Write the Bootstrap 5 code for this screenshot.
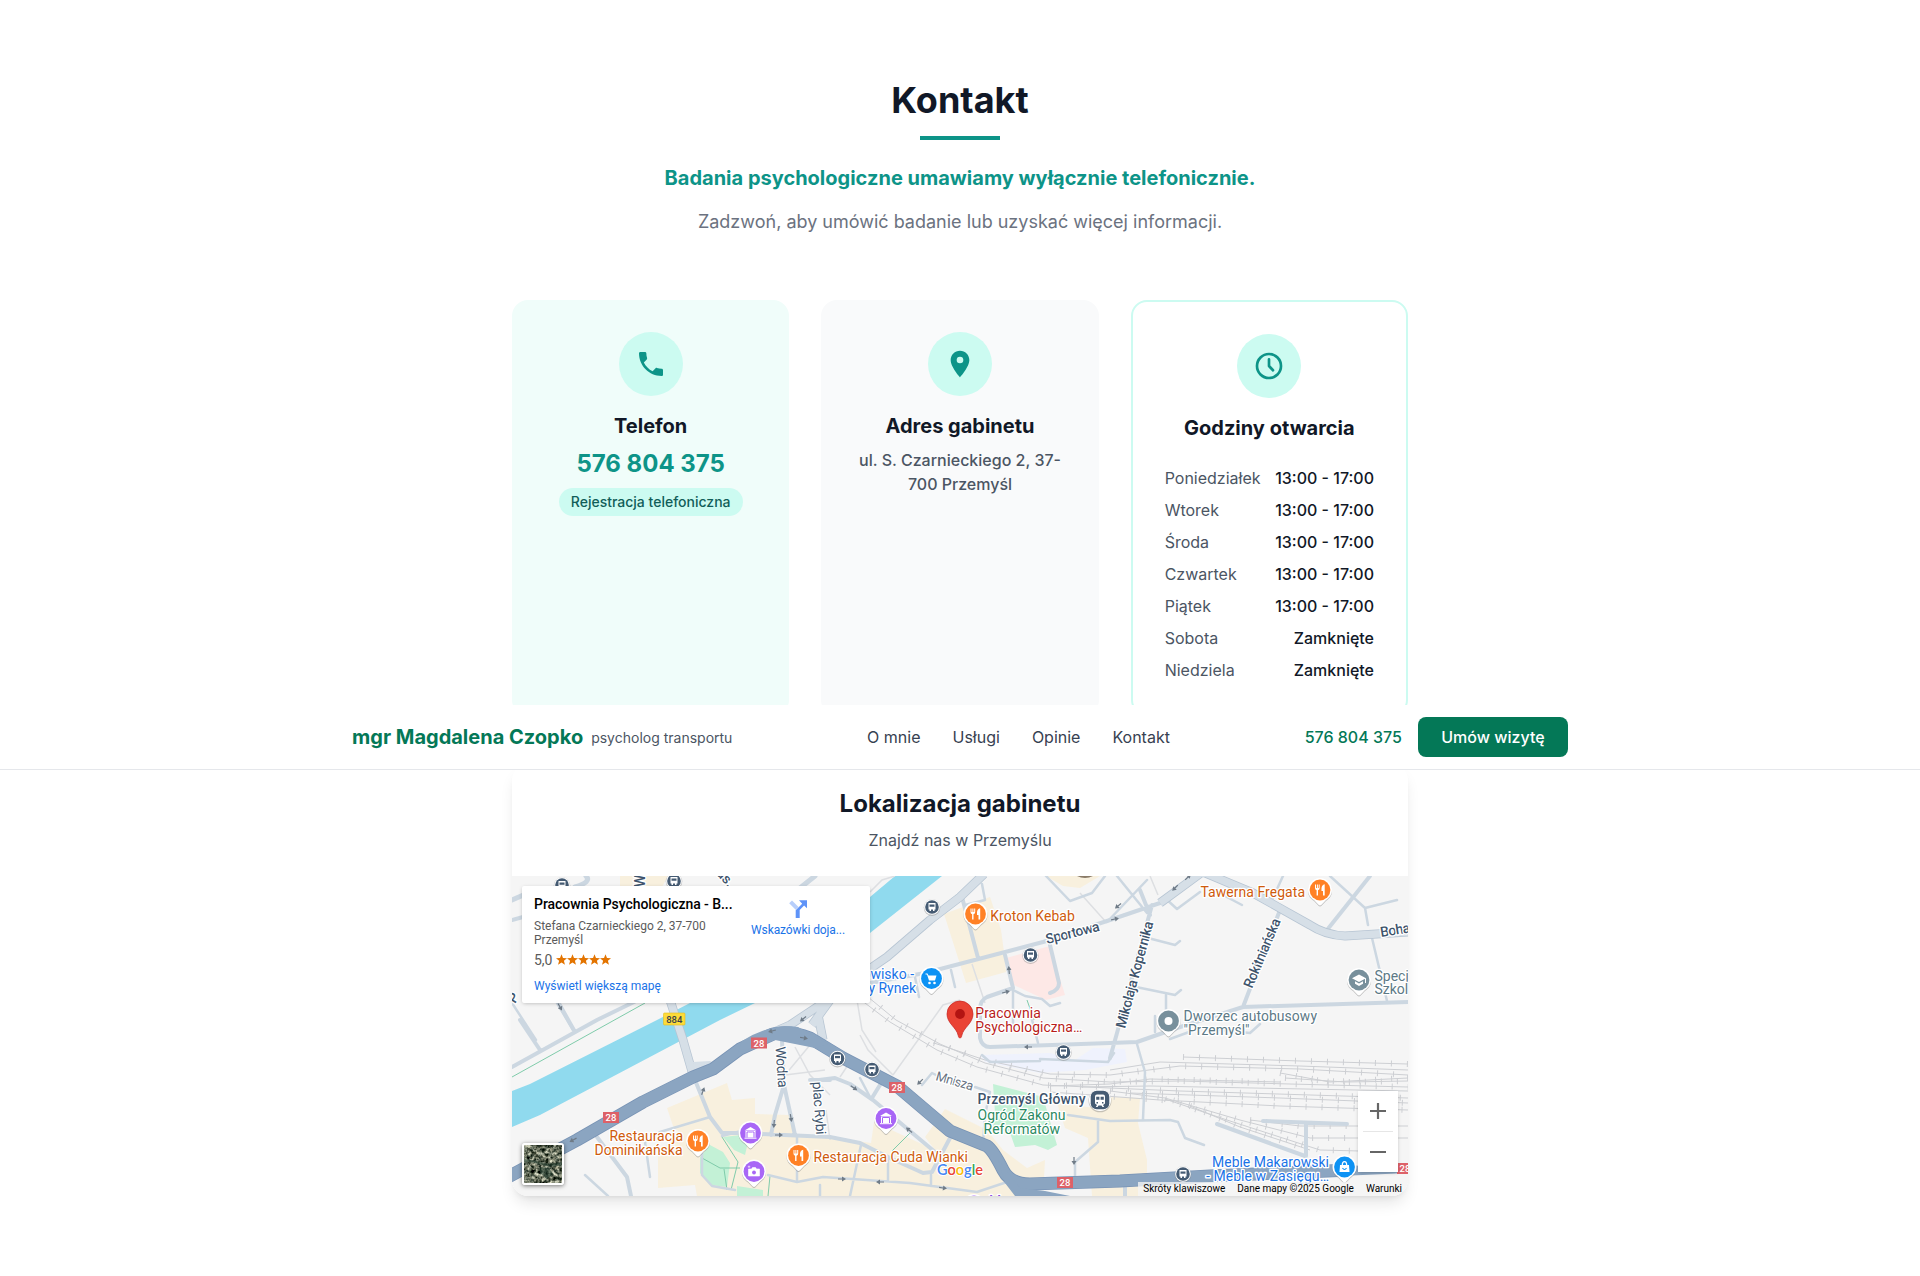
<!DOCTYPE html>
<html lang="pl">
<head>
<meta charset="utf-8">
<meta name="viewport" content="width=device-width, initial-scale=1">
<title>Kontakt – mgr Magdalena Czopko</title>
<link rel="stylesheet" href="https://cdn.jsdelivr.net/npm/bootstrap@5.3.0/dist/css/bootstrap.min.css">
<script src="https://cdn.jsdelivr.net/npm/bootstrap@5.3.0/dist/js/bootstrap.bundle.min.js"></script>
<style>
  body { font-family: Inter, "Noto Sans", sans-serif; color: #111827; background: #fff; overflow: hidden; }
  .contact-section { padding: 80px 0; }
  .narrow { width: 896px; margin: 0 auto; }
  .page-title { font-size: 36px; line-height: 40px; font-weight: 700; margin: 0 0 16px; }
  .title-bar { width: 80px; height: 4px; background: #0d9488; margin: 0 auto 24px; }
  .lead-note { font-size: 20px; line-height: 28px; font-weight: 700; color: #0d9488; margin: 0 0 16px; }
  .sub-note { font-size: 18px; line-height: 28px; color: #6b7280; margin: 0 0 64px; }
  .info-grid { display: grid; grid-template-columns: repeat(3, 1fr); gap: 32px; margin-bottom: 48px; }
  .info-card { border-radius: 16px; padding: 32px; height: 416px; }
  .card-mint { background: #f0fdfa; }
  .card-pale { background: #f9fafb; }
  .card-line { border: 2px solid #ccfbf1; }
  .icon-disc { width: 64px; height: 64px; border-radius: 50%; background: #ccfbf1; color: #0d9488; margin: 0 auto 16px; }
  .info-title { font-size: 20px; line-height: 28px; font-weight: 700; margin: 0 0 8px; }
  .tel-big { font-size: 24px; line-height: 32px; font-weight: 700; color: #0d9488; text-decoration: none; display: block; margin-bottom: 8px; }
  .tel-pill { display: inline-block; background: #ccfbf1; color: #115e59; font-size: 14px; line-height: 20px; font-weight: 500; padding: 4px 12px; border-radius: 14px; }
  .addr { line-height: 24px; color: #4b5563; font-weight: 500; margin: 0; }
  .hours { margin-top: 24px; gap: 8px; line-height: 24px; }
  .hours .day { color: #4b5563; }
  .hours .time { font-weight: 500; }
  .top-strip { position: absolute; top: 705px; left: 0; right: 0; height: 65px; background: #fff; border-bottom: 1px solid #e5e7eb; z-index: 10; }
  .strip-inner { width: 1216px; height: 64px; margin: 0 auto; }
  .brand-name { font-size: 20px; font-weight: 700; color: #047857; }
  .brand-sub { font-size: 14px; color: #4b5563; }
  .strip-link { color: #374151; text-decoration: none; }
  .strip-tel { color: #047857; font-weight: 500; text-decoration: none; }
  .btn-book { height: 40px; padding: 0 22.4px; border-radius: 8px; background: #047857; color: #fff; font-weight: 500; line-height: 38px; }
  .map-card { border-radius: 16px; overflow: hidden; background: #fff; box-shadow: 0 10px 15px -3px rgba(0,0,0,.1), 0 4px 6px -4px rgba(0,0,0,.1); }
  .map-head { padding: 24px; }
  .map-head h3 { font-size: 24px; line-height: 32px; font-weight: 700; margin: 0 0 8px; }
  .map-head p { line-height: 24px; color: #4b5563; margin: 0; }
  .map-box { height: 320px; font-family: Roboto, sans-serif; }
  .map-box > svg { display: block; }
  .place-box { position: absolute; left: 10px; top: 10px; width: 348px; height: 117px; padding: 10px 17px 11px 12px; background: #fff; border-radius: 2px; box-shadow: 0 1px 4px -1px rgba(0,0,0,.3); font-size: 12px; line-height: 14px; color: #5b5b5b; }
  .place-name { font-size: 14px; line-height: 16px; font-weight: 500; color: #000; margin-bottom: 7px; white-space: nowrap; letter-spacing: -.05px; }
  .place-text { width: 205px; }
  .place-rate { font-size: 14px; line-height: 16px; margin-top: 5px; }
  .map-blue { color: #1a73e8; text-decoration: none; white-space: nowrap; }
  .place-dir { width: 110px; padding-top: 4px; }
  .place-dir .map-blue { letter-spacing: -.1px; }
  .zoom-box { position: absolute; right: 10px; top: 215px; width: 40px; height: 81px; background: #fff; box-shadow: 0 1px 4px -1px rgba(0,0,0,.3); }
  .sat-box { position: absolute; left: 10px; top: 267px; width: 42px; height: 42px; border: 2px solid #fff; border-radius: 3px; box-shadow: 0 1px 4px rgba(0,0,0,.5); overflow: hidden; }
  .legal-bar { position: absolute; right: 0; bottom: 0; height: 14px; padding: 0 6px 0 5px; gap: 12px; background: rgba(245,245,245,.78); font-size: 10px; line-height: 14px; color: #000; }
  .lbl text { font-family: Roboto, sans-serif; font-size: 14px; paint-order: stroke; stroke: #fff; stroke-width: 2.6px; stroke-linejoin: round; }
  .road { fill: none; stroke: #ccd7e1; stroke-linejoin: round; stroke-linecap: round; }
</style>
</head>
<body>
<header class="top-strip">
  <div class="strip-inner d-flex justify-content-between align-items-center">
    <div class="d-flex align-items-center gap-2"><span class="brand-name">mgr Magdalena Czopko</span><span class="brand-sub">psycholog transportu</span></div>
    <nav class="d-flex" style="gap:32px"><a class="strip-link" href="#">O mnie</a><a class="strip-link" href="#">Usługi</a><a class="strip-link" href="#">Opinie</a><a class="strip-link" href="#">Kontakt</a></nav>
    <div class="d-flex align-items-center gap-3"><a class="strip-tel" href="#">576 804 375</a><a class="btn btn-book" href="#">Umów wizytę</a></div>
  </div>
</header>

<section class="contact-section">
  <div class="narrow">
    <div class="text-center">
      <h2 class="page-title">Kontakt</h2>
      <div class="title-bar"></div>
      <p class="lead-note">Badania psychologiczne umawiamy wyłącznie telefonicznie.</p>
      <p class="sub-note">Zadzwoń, aby umówić badanie lub uzyskać więcej informacji.</p>
    </div>

    <div class="info-grid">
      <div class="info-card card-mint text-center">
        <div class="icon-disc d-flex align-items-center justify-content-center">
          <svg width="32" height="32" viewBox="0 0 24 24" fill="currentColor"><path d="M6.620 10.790c1.440 2.830 3.760 5.140 6.590 6.590l2.200-2.200c.27-.27.67-.36 1.020-.24 1.120.37 2.330.57 3.570.57.550 0 1 .45 1 1V20c0 .55-.45 1-1 1C10.610 21 3 13.390 3 4c0-.55.45-1 1-1h3.500c.55 0 1 .45 1 1 0 1.250.2 2.450.57 3.570.11.35.03.74-.25 1.020z"/></svg>
        </div>
        <h3 class="info-title">Telefon</h3>
        <a class="tel-big" href="#">576 804 375</a>
        <span class="tel-pill">Rejestracja telefoniczna</span>
      </div>
      <div class="info-card card-pale text-center">
        <div class="icon-disc d-flex align-items-center justify-content-center">
          <svg width="32" height="32" viewBox="0 0 24 24" fill="currentColor"><path d="M12 2C8.130 2 5 5.130 5 9c0 5.250 7 13 7 13s7-7.750 7-13c0-3.870-3.130-7-7-7zm0 9.500a2.500 2.500 0 1 1 0-5 2.500 2.500 0 0 1 0 5z"/></svg>
        </div>
        <h3 class="info-title">Adres gabinetu</h3>
        <p class="addr">ul. S. Czarnieckiego 2, 37-700 Przemyśl</p>
      </div>
      <div class="info-card card-line text-center">
        <div class="icon-disc d-flex align-items-center justify-content-center">
          <svg width="32" height="32" viewBox="0 0 24 24" fill="none" stroke="currentColor" stroke-width="2" stroke-linecap="round" stroke-linejoin="round"><circle cx="12" cy="12" r="9"/><path d="M12 7v5l3 3.200"/></svg>
        </div>
        <h3 class="info-title mb-0">Godziny otwarcia</h3>
        <div class="hours d-flex flex-column">
          <div class="d-flex justify-content-between"><span class="day">Poniedziałek</span><span class="time">13:00 - 17:00</span></div>
          <div class="d-flex justify-content-between"><span class="day">Wtorek</span><span class="time">13:00 - 17:00</span></div>
          <div class="d-flex justify-content-between"><span class="day">Środa</span><span class="time">13:00 - 17:00</span></div>
          <div class="d-flex justify-content-between"><span class="day">Czwartek</span><span class="time">13:00 - 17:00</span></div>
          <div class="d-flex justify-content-between"><span class="day">Piątek</span><span class="time">13:00 - 17:00</span></div>
          <div class="d-flex justify-content-between"><span class="day">Sobota</span><span class="time">Zamknięte</span></div>
          <div class="d-flex justify-content-between"><span class="day">Niedziela</span><span class="time">Zamknięte</span></div>
        </div>
      </div>
    </div>

    <div class="map-card">
      <div class="map-head text-center"><h3>Lokalizacja gabinetu</h3><p>Znajdź nas w Przemyślu</p></div>
      <div class="map-box position-relative">
        <svg width="896" height="320" viewBox="512 876 896 320">
          <defs>
            <g id="pinW"><path d="M-12 1a12 12 0 0 1 24 0c0 5-3 8-6 10l-4.500 4.800q-1.500 1.500-3 0L-6 11c-3-2-6-5-6-10z" fill="#777" opacity=".45"/><path d="M-12 0a12 12 0 0 1 24 0c0 5-3 8-6 10l-4.500 4.800q-1.500 1.500-3 0L-6 10c-3-2-6-5-6-10z" fill="#fff"/></g>
            <g id="food"><use href="#pinW"/><circle r="10.400" fill="#ff8126"/><path d="M-5-5.500v3.500q0 2 1.600 2.300V5.500h1.400V.3Q-.3 0-.3-2v-3.500h-1v3.500h-.8v-3.500h-1v3.500h-.9v-3.500zM4.700-5.700Q1.500-5 1.500-1.500V1H3v4.500h1.700z" fill="#fff"/></g>
            <g id="museum"><use href="#pinW"/><circle r="10.400" fill="#a866f6"/><path d="M-6-2.500L0-6l6 3.500zM-5-2H5V5H-5z" fill="#fff"/><path d="M-3.500 5V-1h7v6M-5.500 5h11" fill="none" stroke="#a866f6" stroke-width="1"/><path d="M-1.800 3.800V.6L0 2.300 1.800.6v3.200" fill="none" stroke="#fff" stroke-width="1.100"/><path d="M-6 5.200H6" stroke="#fff"/></g>
            <g id="photo"><use href="#pinW"/><circle r="10.400" fill="#a866f6"/><path d="M-5.500-2.500h3l1-1.500h3l1 1.500h3V4.500h-11zM-5-6v2.500M-6.200-4.800h2.500" fill="#fff" stroke="#fff" stroke-width=".6"/><circle cy="1" r="1.900" fill="#a866f6"/></g>
            <g id="stop"><circle cy=".6" r="8.300" fill="#777" opacity=".4"/><circle r="7.800" fill="#fff"/><circle r="6.800" fill="#455b73"/><path d="M-3.500-4h7V2.500H2.500V4h-1.500V2.500H-1V4h-1.500V2.500h-1z" fill="#fff"/><path d="M-2.500-2.500h5v2.200h-5z" fill="#455b73"/></g>
            <path id="arw" d="M-4-.6H0V-2.500L4 0 0 2.500V.6h-4z" fill="#6f7b87"/>
          </defs>
          <rect x="512" y="876" width="896" height="320" fill="#f5f5f5"/>
          <!-- built-up areas -->
          <g fill="#f8f0de">
            <path d="M667 1108L727 1083 732 1100 755 1098V1114L790 1115 793 1135 830 1137 871 1143 874 1122 935 1150 925 1137 945 1109 987 1130 1003 1150 1027 1168 1045 1160 1044 1178 1015 1196H697L695 1185 658 1188V1153L680 1133 673 1126z"/>
            <path d="M1057 1103L1095 1108 1112 1097 1140 1098 1138 1123 1147 1160V1196H1092L1088 1138 1065 1128z"/>
            <path d="M944 914L990 897 1001 930 1004 952 1006 972 966 983z"/>
            <path d="M620 876H668L662 887H620zM1046 876H1100L1080 888 1063 886z"/>
          </g>
          <path d="M1006 958L1050 946 1065 995 1046 1000 1014 985z" fill="#fde8e6"/>
          <path d="M980 1055L1050 1053 1075 1060 1093 1048 1125 1049 1127 1062 1085 1070 1040 1073 985 1062z" fill="#eff2fd"/>
          <g fill="#c3f1d6">
            <path d="M993 1084L1043 1097 1057 1145 1048 1150 1035 1145 1015 1147 1010 1133 993 1127 995 1113z"/>
            <path d="M710 1145L723 1152 730 1163 727 1187 710 1185 700 1173V1157zM723 1137L750 1134 745 1155 734 1150zM737 1186l26 4v6h-26z"/>
          </g>
          <!-- river -->
          <path d="M512 1091L530 1084 657 1020 690 1003 870 897 895 876H942L870 933 755 1003 720 1020 540 1115 512 1127z" fill="#90daee"/>
          <path d="M512 1077L645 1003M722 1137L738 1162 731 1190M702 1158L720 1168H740M770 1176L768 1196M724 1169L727 1190M1027 1000L1034 1020M892 1151L910 1133" fill="none" stroke="#7fcbaa"/>
          <!-- footpaths -->
          <path d="M857 1000L862 1030 876 1052M893 1075L943 1005 960 1000M893 1075L868 1050 860 1035M972 964L985 1003M840 1077L850 1062 878 1075M826 1110L830 1140M870 892L882 880 895 876M1080 893L1106 922M795 1047L810 1075 830 1095M810 1045L785 1075 825 1070M1150 876L1158 895" fill="none" stroke="#dddfe2" stroke-width="1.500"/>
          <!-- railway -->
          <g fill="none" stroke="#cdcfd3">
            <g id="rails">
              <path d="M861 1000L890 1022 937 1050 977 1067 1043 1085 1110 1088 1180 1091 1408 1098"/>
              <path d="M868 997L896 1020 940 1044 985 1063 1043 1078 1110 1082 1180 1081 1290 1084 1408 1087"/>
              <path d="M934 1043L985 1060 1050 1074 1110 1075 1180 1066 1300 1069 1408 1075"/>
              <path d="M1183 1057L1300 1061 1408 1064"/>
              <path d="M1050 1086L1110 1084 1150 1079 1280 1082M1280 1073L1330 1082 1408 1078M1285 1078L1345 1082 1408 1081"/>
              <path d="M1050 1092L1160 1100 1280 1106 1408 1110"/>
              <path d="M1110 1091L1165 1098 1240 1120 1310 1138 1408 1138"/>
              <path d="M1165 1099L1230 1121 1320 1150 1360 1151M1190 1106L1240 1127 1310 1150M1250 1120L1300 1126 1408 1126"/>
              <path d="M1130 1093L1280 1098 1408 1103"/>
            </g>
            <use href="#rails" stroke-width="6" stroke-dasharray="1 15"/>
            <path d="M1110 1070L1160 1062 1300 1066 1408 1070M1080 1087L1150 1086 1408 1091"/>
          </g>
          <!-- local roads -->
          <g class="road" stroke-width="2.500">
            <path d="M512 1003L536 1040M573 1030L557 1003M585 1175L608 1196M710 1117L660 1132 645 1142 650 1177M702 1150V1175L712 1186 735 1190M797 1137V1180M745 1130L722 1136M768 1175L797 1182 823 1177 910 1183 977 1192 1007 1182M931 1175V1186M861 1145L850 1196M888 1160V1180M951 970L955 987M915 977L919 997M1013 990L1025 996 1042 999 1050 1006 1060 1003M1030 1012L1038 1043M1013 990V1030M982 1055L990 1062 1040 1061M1114 1053L1108 1062 1040 1059M870 1097L860 1078M922 1085L932 1073 936 1075M975 1087L990 1092 985 1115 983 1143M1068 1115L1110 1121 1170 1120 1178 1122 1185 1138 1204 1145M1098 1120V1142L1075 1162V1178M1137 1044L1145 1072 1143 1119M982 884L985 900 965 905M1046 876L1070 901 1092 893 1105 876M1117 876L1147 913M1147 880L1107 922M1165 898L1177 909 1200 892M1223 895L1242 905M1283 876L1272 900M1330 876L1365 908 1397 900M1365 908L1368 925M1372 938L1387 1001M1148 938L1175 945 1180 941M1136 987L1175 995 1181 990M1166 995V1020M1155 1016V1032M1170 1039L1200 1028 1250 1033 1260 1024M820 1196V1185M1007 1182L1005 1176"/>
          </g>
          <g class="road" stroke-width="4">
            <path d="M512 1067L597 1020 636 1001M520 1020L540 1050M557 1000L575 1032M512 920L530 915M597 1137L627 1177 631 1196M695 1080L710 1117 722 1133H738L830 1137 860 1143 890 1158 923 1173 932 1172 950 1138M782 1040L784 1085 775 1115 771 1135M784 1085L795 1135M819 1080L835 1078 850 1084 873 1100 935 1152M883 1080L872 1098M870 983L925 973 1043 942 1110 920 1160 903 1193 880M962 897L978 958M1005 955L1013 988 987 997Q980 1000 980 1010V1038Q982 1047 990 1047L1110 1043 1137 1042 1177 1028 1243 1007 1408 1002M1050 945L1059 983Q1059 990 1050 993M1152 905L1117 1033 1110 1058M1280 910L1243 1007M1370 876L1327 930M1150 915L1140 890M1217 1124L1305 1156M1263 1121L1347 1124M1306 1124V1156M830 1080H810M1125 1185V1196"/>
          </g>
          <path class="road" d="M512 900L535 890M575 887Q592 882 586 876M800 888L815 876" stroke-width="5"/>
          <!-- secondary roads -->
          <g fill="none" stroke-linejoin="round">
            <path d="M984 874L960 897 930 920 887 957 868 970 830 1000 812 1025M1203 872L1253 893 1310 925Q1325 935 1345 936L1408 932M670 1000L683 1040 693 1075M823 1003L790 1025 745 1045M818 1015L823 1040M1160 903L1205 870" stroke="#b7c5d3" stroke-width="9"/>
            <path d="M984 874L960 897 930 920 887 957 868 970 830 1000 812 1025M1203 872L1253 893 1310 925Q1325 935 1345 936L1408 932M670 1000L683 1040 693 1075M823 1003L790 1025 745 1045M818 1015L823 1040M1160 903L1205 870" stroke="#d6dfe7" stroke-width="7.500"/>
            <path d="M693 1062l17-1 8 4-24 13z" fill="#d6dfe7"/>
          </g>
          <!-- route 28 -->
          <g fill="none" stroke-linejoin="round">
            <path d="M508 1177L577 1140 643 1102 693 1077 713 1069 740 1049 773 1034Q790 1030 810 1038L843 1058 897 1086 950 1131 987 1146Q993 1150 1003 1170 1010 1184 1030 1184L1120 1181 1210 1176 1350 1170" stroke="#7893b5" stroke-width="13"/>
            <path d="M508 1177L577 1140 643 1102 693 1077 713 1069 740 1049 773 1034Q790 1030 810 1038L843 1058 897 1086 950 1131 987 1146Q993 1150 1003 1170 1010 1184 1030 1184L1120 1181 1210 1176 1350 1170" stroke="#8ba5c1" stroke-width="11.500"/>
            <path d="M742 1041Q770 1023 798 1027L828 1044 815 1048 775 1040 738 1053zM998 1160L1020 1188 1045 1191 1070 1196H1015L1005 1183zM1340 1164.500L1408 1169V1173L1340 1176z" fill="#8ba5c1"/>
          </g>
          <g>
            <use href="#arw" transform="translate(1009 970) rotate(-95)"/><use href="#arw" transform="translate(1006 992) rotate(-15)"/><use href="#arw" transform="translate(1028 1047) rotate(180)"/><use href="#arw" transform="translate(1115 919) rotate(-12)"/><use href="#arw" transform="translate(1118 906) rotate(140)"/><use href="#arw" transform="translate(1175 888) rotate(135)"/><use href="#arw" transform="translate(1188 877) rotate(-45)"/><use href="#arw" transform="translate(703 1091) rotate(-70)"/><use href="#arw" transform="translate(774 1124) rotate(95)"/><use href="#arw" transform="translate(791 1118) rotate(80)"/><use href="#arw" transform="translate(779 1135)"/><use href="#arw" transform="translate(573 1140) rotate(152)"/><use href="#arw" transform="translate(772 1031) rotate(165)"/><use href="#arw" transform="translate(804 1038) rotate(10)"/><use href="#arw" transform="translate(803 1019) rotate(140)"/><use href="#arw" transform="translate(560 1007) rotate(60)"/><use href="#arw" transform="translate(854 1088) rotate(35)"/><use href="#arw" transform="translate(920 1082) rotate(135)"/><use href="#arw" transform="translate(909 1130) rotate(-140)"/><use href="#arw" transform="translate(842 1179)"/><use href="#arw" transform="translate(880 1182) rotate(180)"/><use href="#arw" transform="translate(943 1188) rotate(8)"/><use href="#arw" transform="translate(1074 1161) rotate(90)"/>
          </g>
          <!-- road shields -->
          <g font-family="Roboto" font-weight="500" font-size="9.500" text-anchor="middle">
            <g fill="#dd6168"><path d="M603 1112h16v11h-16zM751 1037.500h16v11h-16zM889 1082h16v11h-16zM1057 1177h16v11h-16zM1397 1163h16v11h-16z"/></g>
            <g fill="#fff"><text x="611" y="1121">28</text><text x="759" y="1046.500">28</text><text x="897" y="1091">28</text><text x="1065" y="1186">28</text><text x="1405" y="1172">28</text></g>
            <rect x="663.500" y="1013" width="21.500" height="12" rx="1" fill="#fddb3a" stroke="#e5bd1d" stroke-width=".6"/><text x="674.300" y="1022.500" fill="#39414a">884</text>
          </g>
          <!-- labels -->
          <g class="lbl">
            <g fill="#cf5b0c">
              <text x="990.300" y="921" textLength="84.500">Kroton Kebab</text>
              <text x="1200.500" y="897" textLength="104.500">Tawerna Fregata</text>
              <text x="609.500" y="1141" textLength="73.500">Restauracja</text>
              <text x="594.500" y="1155" textLength="88">Dominikańska</text>
              <text x="813.500" y="1162" textLength="154.500">Restauracja Cuda Wianki</text>
            </g>
            <g fill="#3e546c" font-weight="500">
              <text transform="translate(1047 944) rotate(-14)" textLength="55">Sportowa</text>
              <text transform="translate(1125 1029) rotate(-75)" textLength="110">Mikołaja Kopernika</text>
              <text transform="translate(1252 989) rotate(-67)" textLength="74">Rokitniańska</text>
              <text transform="translate(1381 937) rotate(-9)" textLength="62">Bohaterów</text>
              <text transform="translate(775.500 1047) rotate(86)" textLength="41" font-weight="400">Wodna</text>
              <text transform="translate(812.500 1082) rotate(86)" textLength="53" font-weight="400">plac Rybi</text>
              <text x="977.500" y="1104" textLength="108">Przemyśl Główny</text>
              <text transform="translate(645 887) rotate(-90)">Wa</text>
              <text transform="translate(716 874) rotate(48)">as.</text>
              <text transform="translate(515 1004) rotate(-58)">P</text>
            </g>
            <text transform="translate(935 1080) rotate(16)" textLength="38.500" fill="#667180" style="font-size:13px">Mnisza</text>
            <g fill="#b81d1b"><text x="975.300" y="1017.500" textLength="65.500">Pracownia</text><text x="975.300" y="1031.500" textLength="107">Psychologiczna…</text></g>
            <g fill="#1a73e8"><text x="914" y="978.500" text-anchor="end">Targowisko -</text><text x="916" y="992.500" text-anchor="end">Zielony Rynek</text><text x="1212" y="1167" textLength="117">Meble Makarowski</text><text x="1206" y="1181" textLength="123">- Meble w Zasięgu…</text></g>
            <g fill="#5c7986"><text x="1183.500" y="1021" textLength="133.500">Dworzec autobusowy</text><text x="1183.500" y="1035" textLength="66">"Przemyśl"</text><text x="1374.500" y="980.500">Specjalny</text><text x="1374.500" y="994">Szkolno</text></g>
            <g fill="#2b8a62"><text x="977.500" y="1120" textLength="88">Ogród Zakonu</text><text x="983.500" y="1134" textLength="76.500">Reformatów</text></g>
            <text x="989" y="1206" fill="#8e4ce0">Muzeum</text>
          </g>
          <!-- points of interest -->
          <use href="#stop" x="562" y="885"/><use href="#stop" x="674" y="881"/><use href="#stop" x="932" y="907"/><use href="#stop" x="1030.500" y="955"/><use href="#stop" x="837.500" y="1058.500"/><use href="#stop" x="872" y="1069.500"/><use href="#stop" x="1063.500" y="1052"/><use href="#stop" x="1183" y="1174"/>
          <g transform="translate(1100 1100)"><circle cy=".8" r="11.500" fill="#777" opacity=".4"/><circle r="11" fill="#fff"/><rect x="-9.300" y="-9.300" width="18.600" height="18.600" rx="6" fill="#455b73"/><path d="M-3-5.500h6Q5-5.500 5-3.500v7L3 5l1.200 2H2.500L1.500 5.500h-3L-2.500 7h-1.700L-3 5l-2-1.500v-7Q-5-5.500-3-5.500z" fill="#fff"/><path d="M-3.800-3.300h3.200v3h-3.200zM.6-3.300h3.200v3H.6zM-3.500 2h1.500v1.500h-1.500zM2 2h1.500v1.500H2z" fill="#455b73"/></g>
          <use href="#food" x="975.500" y="914"/><use href="#food" x="1320" y="890"/><use href="#food" x="698" y="1141"/><use href="#food" x="798.500" y="1155.500"/>
          <use href="#museum" x="750.500" y="1133"/><use href="#museum" x="886" y="1118.500"/><use href="#photo" x="754" y="1171.500"/><use href="#museum" x="974" y="1206"/>
          <path d="M1077 876h16q-8 4-16 0z" fill="#8a7b68"/>
          <g transform="translate(931.500 978.500)"><use href="#pinW"/><circle r="10.400" fill="#0d92f4"/><path d="M-6-5h2l1 2h8L3.500 2h-6L-4.500-4H-6" fill="#fff"/><circle cx="-2" cy="4.500" r="1.300" fill="#fff"/><circle cx="3" cy="4.500" r="1.300" fill="#fff"/></g>
          <g transform="translate(1344.500 1167)"><use href="#pinW"/><circle r="10.400" fill="#0d92f4"/><path d="M-4.500-2h9L5 5H-5z" fill="#fff"/><path d="M-2.200-1.500q0-3.800 2.200-3.800t2.200 3.800" fill="none" stroke="#fff" stroke-width="1.300"/><path d="M-2 1q2 3 4 0" fill="none" stroke="#0d92f4" stroke-width="1.200"/></g>
          <g transform="translate(1168.500 1021)"><use href="#pinW"/><circle r="10.400" fill="#78909c"/><circle r="4" fill="#fff"/></g>
          <g transform="translate(1359 980)"><use href="#pinW"/><circle r="10.400" fill="#78909c"/><path d="M0-5.500L7-1.800 0 2-7-1.800zM-4 1.200L0 3.400 4 1.200v2.500L0 6-4 3.700zM6-1.500h1v4.500H6z" fill="#fff"/></g>
          <path d="M960 1038c-1 0-1.500-1-1.800-2.500-1.500-8-11.200-12-11.200-21.500a13 13 0 0 1 26 0c0 9.500-9.700 13.500-11.200 21.500-.3 1.500-.8 2.500-1.800 2.500z" fill="#ea4335" stroke="#c5221f" stroke-width=".7"/><circle cx="960" cy="1014" r="4.900" fill="#b31412"/>
          <text x="937" y="1174.500" textLength="46" lengthAdjust="spacingAndGlyphs" style="font:600 16px Lato,sans-serif;paint-order:stroke;stroke:#fff;stroke-width:2px"><tspan fill="#4285f4">G</tspan><tspan fill="#ea4335">o</tspan><tspan fill="#fbbc04">o</tspan><tspan fill="#4285f4">g</tspan><tspan fill="#34a853">l</tspan><tspan fill="#ea4335">e</tspan></text>
        </svg>

        <div class="place-box d-flex justify-content-between">
          <div class="place-text">
            <div class="place-name">Pracownia Psychologiczna - B...</div>
            <div>Stefana Czarnieckiego 2, 37-700<br>Przemyśl</div>
            <div class="place-rate d-flex align-items-center"><span>5,0</span>
              <svg style="margin-left:3px" width="55" height="12" viewBox="0 0 55 12" fill="#e37400"><path id="st" d="M5.500.3l1.500 3.700 4 .2-3.100 2.500 1.050 4L5.500 8.600l-3.450 2.100 1.050-4L0 4.200l4-.2z"/><use href="#st" x="11"/><use href="#st" x="22"/><use href="#st" x="33"/><use href="#st" x="44"/></svg>
            </div>
            <a class="map-blue d-block" style="margin-top:11px" href="#">Wyświetl większą mapę</a>
          </div>
          <div class="place-dir text-center">
            <svg class="d-block mx-auto" width="18" height="18" viewBox="0 0 18 18"><path d="M.2 3.200L3 .4l6.500 6.500-2.800 2.800z" fill="#b7cefb"/><path d="M6.700 18V10.200L13.200 3.700 10 .3h8v8l-2.900-2.800-4.400 4.500v8z" fill="#5e93f8"/></svg>
            <a class="map-blue d-block" style="margin-top:5px" href="#">Wskazówki doja...</a>
          </div>
        </div>
        <div class="sat-box">
          <svg class="d-block" width="38" height="38" viewBox="0 0 38 38"><filter id="grain" x="0" y="0" width="100%" height="100%" color-interpolation-filters="sRGB"><feTurbulence type="fractalNoise" baseFrequency=".28" numOctaves="3" seed="8"/><feColorMatrix values="1.400 .7 0 0 -.64  1.300 .7 0 0 -.56  1.200 .7 0 0 -.58  0 0 0 0 1"/></filter><rect width="38" height="38" filter="url(#grain)"/><path d="M0 14q14 2 20 4t18-1v3q-14 3-20 0T0 17zM16 22l9 1 4 6-6 5-7-6z" fill="#1f382c" opacity=".6"/></svg>
        </div>
        <div class="zoom-box">
          <svg class="d-block" width="40" height="81" viewBox="0 0 40 81"><path d="M12 20h16M20 12v16M12 61h16" stroke="#666" stroke-width="2.200"/><path d="M5 40.500h30" stroke="#e6e6e6"/></svg>
        </div>
        <div class="legal-bar d-flex"><span>Skróty klawiszowe</span><span>Dane mapy ©2025 Google</span><span>Warunki</span></div>
      </div>
    </div>
  </div>
</section>
</body>
</html>
